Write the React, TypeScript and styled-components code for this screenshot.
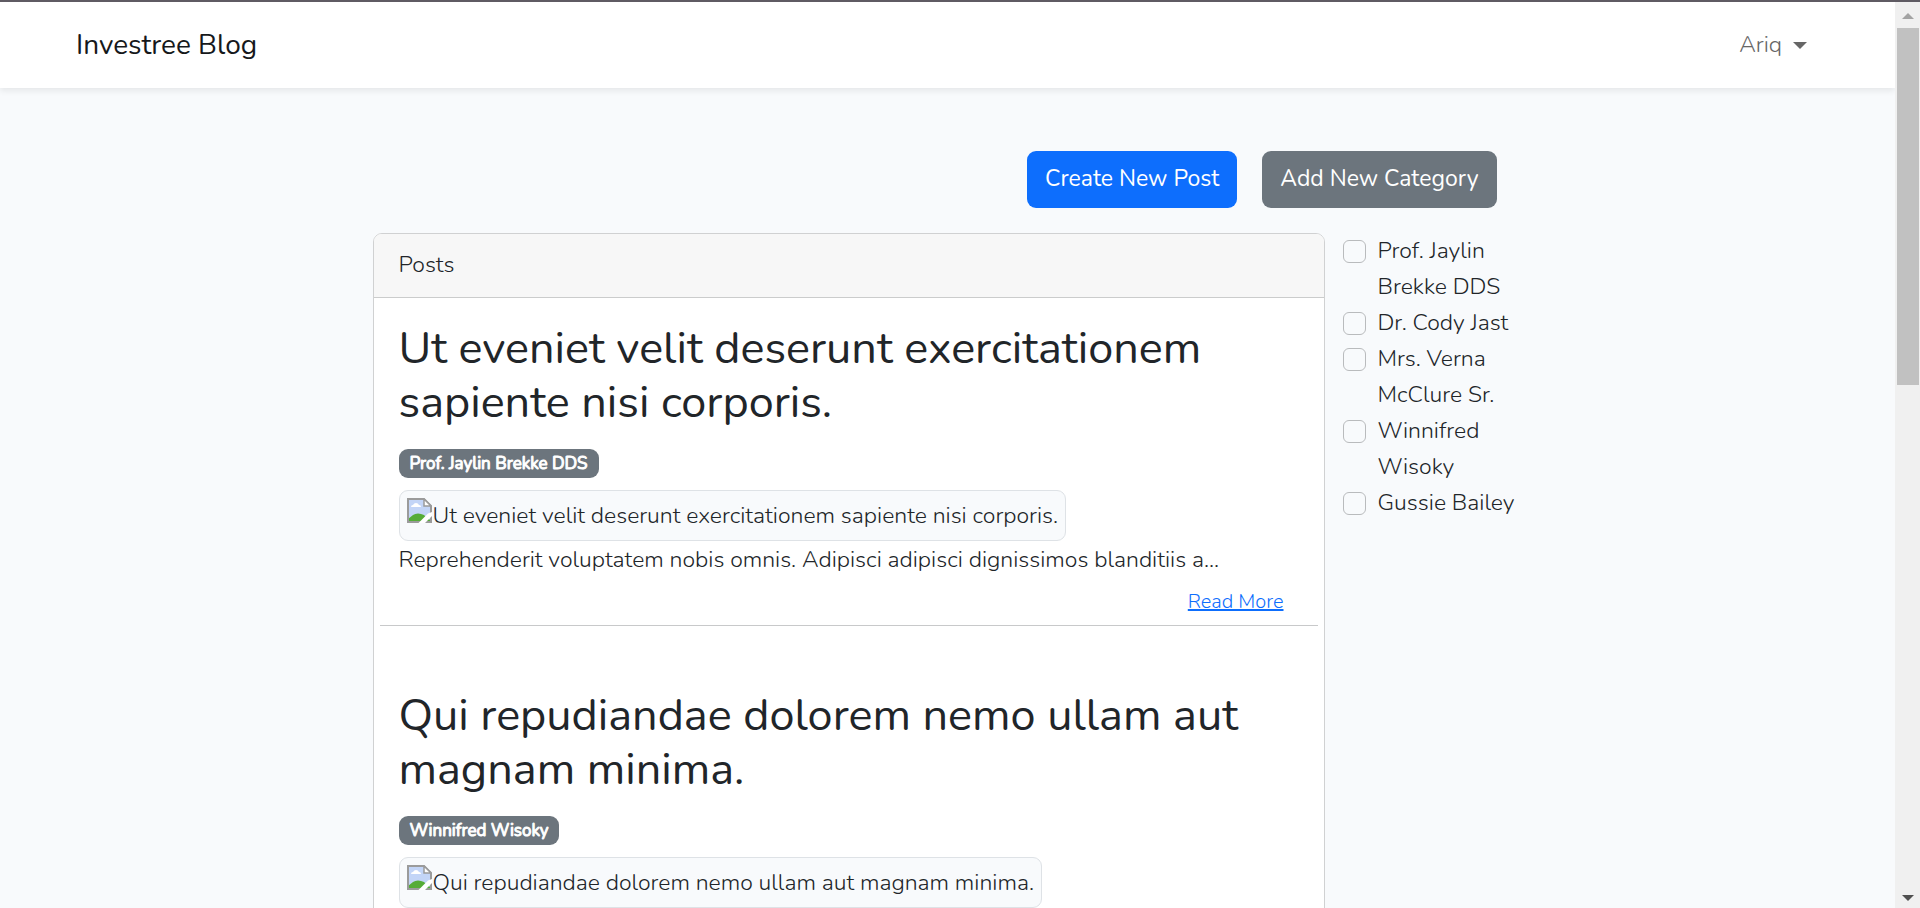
import React from "react";
import styled, { createGlobalStyle } from "styled-components";

const GlobalStyle = createGlobalStyle`
  *, *::before, *::after { box-sizing: border-box; }
  body {
    margin: 0;
    font-family: Nunito, "Open Sans", sans-serif;
    font-size: 23px;
    font-weight: 300;
    line-height: 36px;
    color: #212529;
    background: #f8fafc;
  }
  h2, p { margin: 0; }
`;

const Window = styled.div`
  display: grid;
  grid-template-columns: minmax(0, 1fr) 25px;
  height: 100vh;
  border-top: 2px solid #5f5b63;
`;

const Page = styled.div`
  min-height: 0;
  overflow-y: auto;
  scrollbar-width: none;
`;

const Navbar = styled.nav`
  display: flex;
  align-items: center;
  justify-content: space-between;
  height: 86px;
  padding: 0 88px 0 76px;
  background: #fff;
  box-shadow: 0 3px 6px rgba(0, 0, 0, 0.075);
`;

const Brand = styled.a`
  font-size: 28px;
  font-weight: 400;
  color: #16181b;
  text-decoration: none;
`;

const UserMenu = styled.button`
  display: flex;
  align-items: center;
  gap: 11px;
  padding: 0;
  border: 0;
  background: none;
  font: inherit;
  color: #666;
  cursor: pointer;
`;

const Caret = styled.span`
  border: 7px solid transparent;
  border-top-color: currentColor;
  border-bottom: 0;
`;

const Main = styled.main`
  max-width: 1186px;
  margin: 0 auto;
  padding: 63px 18px 36px;
`;

const Actions = styled.div`
  display: flex;
  justify-content: flex-end;
  gap: 25px;
  padding-right: 26px;
  margin-bottom: 25px;
`;

const ActionButton = styled.button<{ $tone: "primary" | "secondary" }>`
  height: 57px;
  padding: 0 18px 2px;
  border: 0;
  border-radius: 9px;
  background: ${(p) => (p.$tone === "primary" ? "#0d6efd" : "#6c757d")};
  color: #fff;
  font: inherit;
  font-weight: 400;
  cursor: pointer;
`;

const Columns = styled.div`
  display: grid;
  grid-template-columns: minmax(0, 1fr) 180px;
  gap: 18px;
  align-items: start;
`;

const Card = styled.section`
  border: 1px solid #d0d1d2;
  border-radius: 9px;
  background: #fff;
  overflow: hidden;
`;

const CardHeader = styled.header`
  padding: 13px 25px 14px;
  border-bottom: 1px solid #cbcccc;
  background: #f7f7f7;
`;

const Post = styled.article`
  display: flex;
  flex-direction: column;
  align-items: flex-start;
  margin: 0 6px;
  padding: 24px 19px 7px;
  & + & {
    padding-top: 63px;
    border-top: 1px solid #c8c9ca;
  }
`;

const Title = styled.h2`
  margin-bottom: 19px;
  font-size: 45px;
  font-weight: 400;
  line-height: 54px;
`;

const Badge = styled.span`
  margin-bottom: 12px;
  padding: 1px 11px 0;
  border-radius: 9px;
  background: #6c757d;
  color: #fff;
  font-size: 17px;
  font-weight: 400;
  line-height: 28px;
  -webkit-text-stroke: 1px #fff;
`;

const Thumbnail = styled.figure`
  display: flex;
  align-items: flex-start;
  gap: 1px;
  margin: 0 0 1px;
  padding: 7px 7px 6px;
  border: 1px solid #dee2e6;
  border-radius: 9px;
  background: #f8fafc;
`;

const Excerpt = styled.p`
  min-height: 36px;
`;

const ReadMore = styled.a`
  align-self: flex-end;
  margin: 8px 15px 0 0;
  font-size: 20px;
  line-height: 32px;
  color: #0d6efd;
`;

const Filters = styled.form`
  display: flex;
  flex-direction: column;
`;

const Filter = styled.label`
  display: flex;
  align-items: flex-start;
  gap: 12px;
`;

const Checkbox = styled.input`
  appearance: none;
  flex: none;
  width: 23px;
  height: 23px;
  margin: 7px 0 0;
  border: 1px solid #b9bbbd;
  border-radius: 6px;
`;

const Scrollbar = styled.div`
  display: flex;
  flex-direction: column;
  align-items: center;
  background: #f0f0f0;
`;

const ScrollArrow = styled.span<{ $down?: boolean }>`
  flex: none;
  margin: ${(p) => (p.$down ? "7px 0" : "11px 0 9px")};
  border: 6px solid transparent;
  ${(p) =>
    p.$down
      ? "border-top-color: #505050; border-bottom-width: 0;"
      : "border-bottom-color: #a3a3a3; border-top-width: 0;"}
`;

const ScrollTrack = styled.div`
  flex: 1;
  width: 22px;
`;

const ScrollThumb = styled.div`
  height: 41.5%;
  background: #c1c1c1;
`;

const BrokenImage = () => (
  <svg width="25" height="25" viewBox="0 0 25 25" aria-hidden="true">
    <path d="M1 1h16l7 7v16H1z" fill="#c3d5f7" />
    <path d="M4 9q0-2 2-2 1-2 3-2t3 2q2 0 2 2z" fill="#fff" />
    <path d="M1 24v-3l5-4q2-1.500 5-1.500t6 1.500l4 4 3 1v2z" fill="#55ac38" />
    <path d="M1 24V1h16l7 7v16z" fill="none" stroke="#9b9b9b" strokeWidth="2" />
    <path d="M17 1v7h7z" fill="#fff" stroke="#9b9b9b" strokeWidth="1.5" />
    <path d="M25 14v4L18 25H11.500L21 15.500z" fill="#fff" />
  </svg>
);

type PostData = { title: string; category: string; excerpt?: string };

const posts: PostData[] = [
  {
    title: "Ut eveniet velit deserunt exercitationem sapiente nisi corporis.",
    category: "Prof. Jaylin Brekke DDS",
    excerpt:
      "Reprehenderit voluptatem nobis omnis. Adipisci adipisci dignissimos blanditiis a...",
  },
  {
    title: "Qui repudiandae dolorem nemo ullam aut magnam minima.",
    category: "Winnifred Wisoky",
  },
];

const categories = [
  "Prof. Jaylin Brekke DDS",
  "Dr. Cody Jast",
  "Mrs. Verna McClure Sr.",
  "Winnifred Wisoky",
  "Gussie Bailey",
];

export default function App() {
  return (
    <>
      <GlobalStyle />
      <Window>
        <Page>
          <Navbar>
            <Brand href="#">Investree Blog</Brand>
            <UserMenu type="button">
              Ariq
              <Caret />
            </UserMenu>
          </Navbar>
          <Main>
            <Actions>
              <ActionButton type="button" $tone="primary">
                Create New Post
              </ActionButton>
              <ActionButton type="button" $tone="secondary">
                Add New Category
              </ActionButton>
            </Actions>
            <Columns>
              <Card>
                <CardHeader>Posts</CardHeader>
                {posts.map((post) => (
                  <Post key={post.title}>
                    <Title>{post.title}</Title>
                    <Badge>{post.category}</Badge>
                    <Thumbnail>
                      <BrokenImage />
                      <span>{post.title}</span>
                    </Thumbnail>
                    <Excerpt>{post.excerpt}</Excerpt>
                    {post.excerpt && <ReadMore href="#">Read More</ReadMore>}
                  </Post>
                ))}
              </Card>
              <Filters>
                {categories.map((name) => (
                  <Filter key={name}>
                    <Checkbox type="checkbox" />
                    <span>{name}</span>
                  </Filter>
                ))}
              </Filters>
            </Columns>
          </Main>
        </Page>
        <Scrollbar aria-hidden="true">
          <ScrollArrow />
          <ScrollTrack>
            <ScrollThumb />
          </ScrollTrack>
          <ScrollArrow $down />
        </Scrollbar>
      </Window>
    </>
  );
}
